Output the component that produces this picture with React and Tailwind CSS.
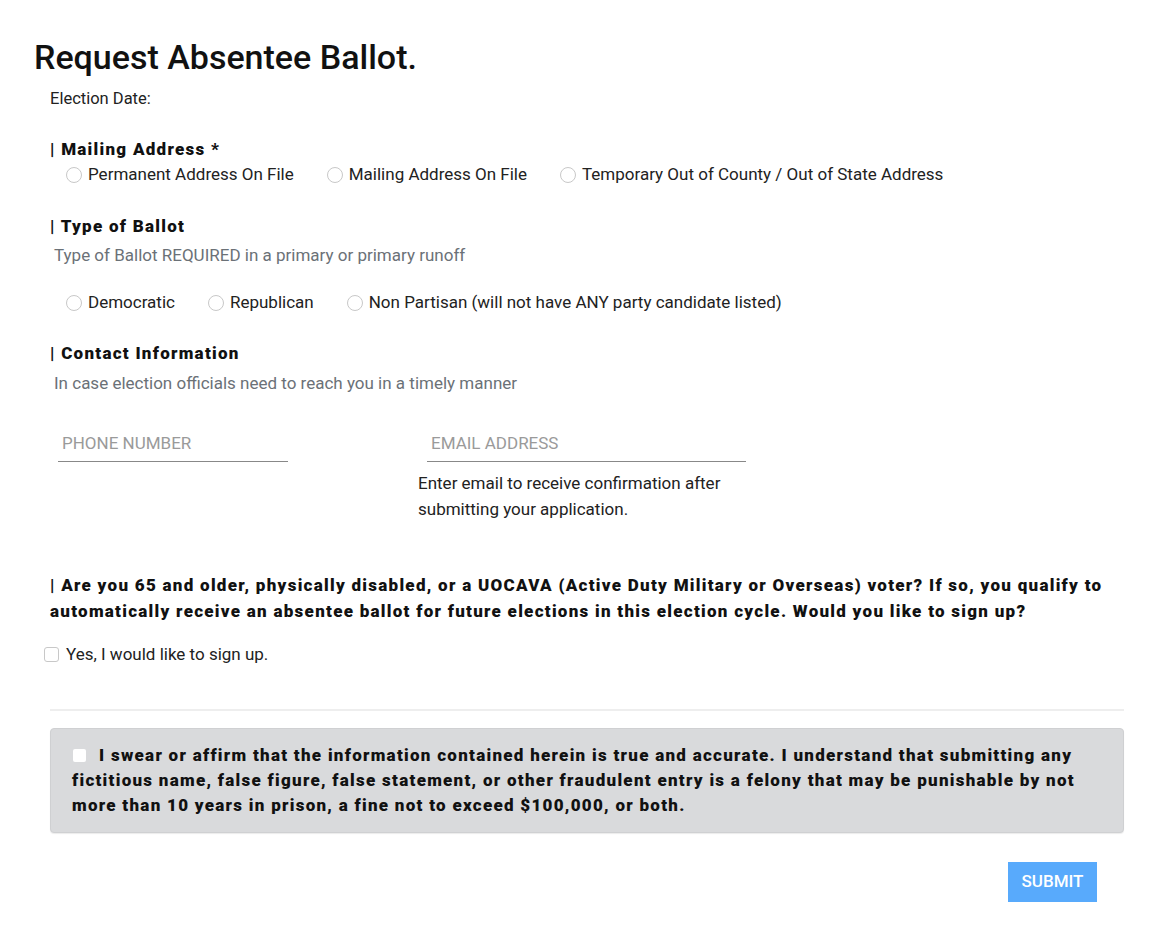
export default function App() {
  const heading = "text-[17px] leading-[26px] font-black tracking-[0.075em] text-[#111]";
  const Radio = ({ label }) => (
    <label className="flex items-center gap-[6px] text-[17px] text-[#222]">
      <span className="w-[16px] h-[16px] rounded-full border border-[#c8c8c8] bg-white inline-block"></span>
      {label}
    </label>
  );
  return (
    <div className="bg-white w-[1160px] min-h-[947px] text-[#222]" style={{ fontFamily: "Roboto, 'Liberation Sans', sans-serif" }}>
      <div className="pt-[37px] pl-[34px] pr-[36px]">
        <h1 className="text-[34px] leading-[40px] font-medium text-[#111]">Request Absentee Ballot.</h1>
        <div className="pl-[16px]">
          <p className="mt-[13px] text-[16.5px] leading-[18px]">Election Date:</p>

          <h2 className={`${heading} mt-[28px]`}>| Mailing Address *</h2>
          <div className="flex items-center pl-[16px] gap-[33px] h-[24px] mt-[1px]">
            <Radio label="Permanent Address On File" />
            <Radio label="Mailing Address On File" />
            <Radio label="Temporary Out of County / Out of State Address" />
          </div>

          <h2 className={`${heading} mt-[26px]`}>| Type of Ballot</h2>
          <p className="text-[17px] leading-[24px] text-[#6b7177] pl-[4px] mt-[4px]">Type of Ballot REQUIRED in a primary or primary runoff</p>
          <div className="flex items-center pl-[16px] gap-[33px] h-[24px] mt-[24px]">
            <Radio label="Democratic" />
            <Radio label="Republican" />
            <Radio label="Non Partisan (will not have ANY party candidate listed)" />
          </div>

          <h2 className={`${heading} mt-[25px]`}>| Contact Information</h2>
          <p className="text-[17px] leading-[24px] text-[#6b7177] pl-[4px] mt-[5px]">In case election officials need to reach you in a timely manner</p>

          <div className="flex mt-[33px]">
            <div className="ml-[8px] w-[230px]">
              <div className="h-[34px] border-b border-[#888] flex items-center pl-[4px] pb-[2px] text-[17px] text-[#9a9a9a]">PHONE NUMBER</div>
            </div>
            <div className="ml-[139px] w-[319px]">
              <div className="h-[34px] border-b border-[#888] flex items-center pl-[4px] pb-[2px] text-[17px] text-[#9a9a9a]">EMAIL ADDRESS</div>
              <p className="-ml-[9px] mt-[8px] text-[17px] leading-[26px] text-[#222]">Enter email to receive confirmation after<br />submitting your application.</p>
            </div>
          </div>

          <h2 className={`${heading} mt-[50px]`}>| Are you 65 and older, physically disabled, or a UOCAVA (Active Duty Military or Overseas) voter? If so, you qualify to automatically receive an absentee ballot for future elections in this election cycle. Would you like to sign up?</h2>
        </div>
        <label className="flex items-center gap-[7px] mt-[18px] ml-[10px] text-[17px] text-[#222]">
          <span className="w-[15px] h-[15px] rounded-[3px] border border-[#c8c8c8] bg-white inline-block"></span>
          Yes, I would like to sign up.
        </label>

        <div className="ml-[16px] mt-[41px] border-t-2 border-[#eeeeee]"></div>

        <div className="ml-[16px] mt-[17px] bg-[#d9dadc] border border-[#cfd0d2] rounded-[4px] px-[21px] pt-[14px] pb-[14px] shadow-[0_1px_1px_rgba(0,0,0,0.08)]">
          <p className="text-[17px] leading-[25px] font-black tracking-[0.075em] text-[#111]">
            <span className="inline-block w-[13px] h-[13px] rounded-[2px] bg-white align-[-1px] ml-[1px] mr-[13px]"></span>
            I swear or affirm that the information contained herein is true and accurate. I understand that submitting any fictitious name, false figure, false statement, or other fraudulent entry is a felony that may be punishable by not more than 10 years in prison, a fine not to exceed $100,000, or both.
          </p>
        </div>

        <div className="flex justify-end mt-[29px] mr-[27px]">
          <button className="w-[89px] h-[40px] bg-[#58aafc] text-white text-[17px] font-medium">SUBMIT</button>
        </div>
      </div>
    </div>
  );
}
